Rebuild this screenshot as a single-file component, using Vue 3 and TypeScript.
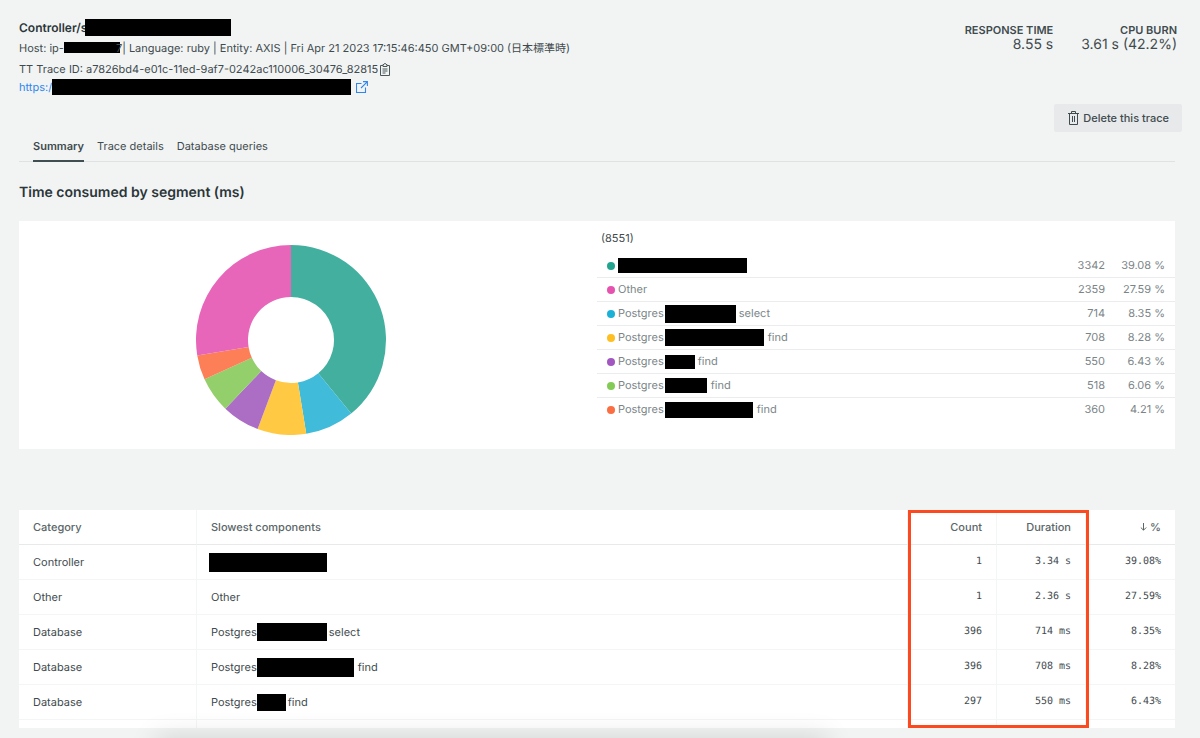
<script setup lang="ts">
interface Segment {
  label: string
  mask: number
  maskHeight: number
  gap: number
  suffix: string
  ms: number
  percent: string
  dot: string
  fill: string
}

interface Component {
  category: string
  label: string
  mask: number
  maskHeight: number
  gap: number
  suffix: string
  count: number
  duration: string
  percent: string
}

const segments: Segment[] = [
  { label: '', mask: 129, maskHeight: 15, gap: 0, suffix: '', ms: 3342, percent: '39.08', dot: '#22a48f', fill: '#43b09f' },
  { label: 'Other', mask: 0, maskHeight: 0, gap: 0, suffix: '', ms: 2359, percent: '27.59', dot: '#e553ae', fill: '#e866b9' },
  { label: 'Postgres', mask: 71, maskHeight: 18, gap: 3, suffix: 'select', ms: 714, percent: '8.35', dot: '#1bb0d6', fill: '#40bbda' },
  { label: 'Postgres', mask: 99, maskHeight: 17, gap: 4, suffix: 'find', ms: 708, percent: '8.28', dot: '#ffbf22', fill: '#ffc943' },
  { label: 'Postgres', mask: 30, maskHeight: 14, gap: 3, suffix: 'find', ms: 550, percent: '6.43', dot: '#a157bf', fill: '#ac6dc5' },
  { label: 'Postgres', mask: 42, maskHeight: 15, gap: 4, suffix: 'find', ms: 518, percent: '6.06', dot: '#84cb55', fill: '#93cf6a' },
  { label: 'Postgres', mask: 88, maskHeight: 16, gap: 4, suffix: 'find', ms: 360, percent: '4.21', dot: '#fb6e42', fill: '#fc7f57' },
]

const components: Component[] = [
  { category: 'Controller', label: '', mask: 118, maskHeight: 19, gap: 0, suffix: '', count: 1, duration: '3.34 s', percent: '39.08%' },
  { category: 'Other', label: 'Other', mask: 0, maskHeight: 0, gap: 0, suffix: '', count: 1, duration: '2.36 s', percent: '27.59%' },
  { category: 'Database', label: 'Postgres', mask: 70, maskHeight: 18, gap: 2, suffix: 'select', count: 396, duration: '714 ms', percent: '8.35%' },
  { category: 'Database', label: 'Postgres', mask: 97, maskHeight: 19, gap: 4, suffix: 'find', count: 396, duration: '708 ms', percent: '8.28%' },
  { category: 'Database', label: 'Postgres', mask: 29, maskHeight: 17, gap: 2, suffix: 'find', count: 297, duration: '550 ms', percent: '6.43%' },
]

const total = segments.reduce((sum, s) => sum + s.ms, 0)
const ringOrder = [0, 2, 3, 4, 5, 6, 1]

function point(radius: number, turn: number): string {
  const a = turn * Math.PI * 2
  return `${(95 + radius * Math.sin(a)).toFixed(2)} ${(95 - radius * Math.cos(a)).toFixed(2)}`
}

let start = 0
const slices = ringOrder.map((i) => {
  const end = start + segments[i].ms / total
  const large = end - start > 0.5 ? 1 : 0
  const d = `M${point(95, start)}A95 95 0 ${large} 1 ${point(95, end)}L${point(43, end)}A43 43 0 ${large} 0 ${point(43, start)}Z`
  start = end
  return { d, fill: segments[i].fill }
})
</script>

<template>
  <main class="page">
    <header class="head">
      <div class="info">
        <h1 class="title">Controller/s<span class="mask over" :style="{ width: '146px', height: '17px' }"></span></h1>
        <p class="host"><span>Host: ip-</span><span class="mask" :style="{ width: '56px', height: '11px' }"></span><span class="tail">7</span><span>| Language: ruby | Entity: AXIS | Fri Apr 21 2023 17:15:46:450 GMT+09:00 (日本標準時)</span></p>
        <p class="trace">
          <span>TT Trace ID: a7826bd4-e01c-11ed-9af7-0242ac110006_30476_82815</span>
          <button class="copy" type="button" aria-label="Copy trace ID">
            <svg width="10" height="13" viewBox="0 0 10 13" fill="none" stroke="#4c5759">
              <path d="M3 2.5H.5v10h9v-10H7M3 1.5h1L4.5.5h1l.5 1h1v2H3zM2.5 6h5M2.5 8h5M2.5 10h3" />
            </svg>
          </button>
        </p>
        <p class="url">
          <a href="#">
            <span>https:/</span><span class="mask" :style="{ width: '299px', height: '16px' }"></span>
            <svg class="ext" width="12" height="12" viewBox="0 0 12 12" fill="none" stroke="#2f86ee" stroke-width="1.1">
              <path d="M5.5 2.5h-5v9h9v-5M7 .6h4.4V5M11.2.8 5 7" />
            </svg>
          </a>
        </p>
      </div>
      <div class="side">
        <dl class="metrics">
          <div><dt>RESPONSE TIME</dt><dd>8.55 s</dd></div>
          <div><dt>CPU BURN</dt><dd>3.61 s (42.2%)</dd></div>
        </dl>
        <button class="delete" type="button">
          <svg width="11" height="14" viewBox="0 0 11 14" fill="none" stroke="#3f4b4e">
            <path d="M0 2.5h11M3.5 2V.5h4V2M1.5 2.5v11h8v-11M4.5 5v6M6.5 5v6" />
          </svg>
          Delete this trace
        </button>
      </div>
    </header>

    <nav class="tabs">
      <a class="active" href="#" aria-current="page">Summary</a>
      <a href="#">Trace details</a>
      <a href="#">Database queries</a>
    </nav>

    <h2 class="heading">Time consumed by segment (ms)</h2>

    <section class="panel">
      <div class="chart">
        <svg width="190" height="190" viewBox="0 0 190 190" role="img" aria-label="Time consumed by segment">
          <path v-for="(s, i) in slices" :key="i" :d="s.d" :fill="s.fill" />
        </svg>
      </div>
      <div class="legend">
        <p class="total">({{ total }})</p>
        <table>
          <tbody>
            <tr v-for="(s, i) in segments" :key="i">
              <td>
                <div class="name">
                  <span class="dot" :style="{ background: s.dot }"></span>
                  <span v-if="s.label" class="label">{{ s.label }}</span>
                  <span v-if="s.mask" class="mask" :style="{ width: s.mask + 'px', height: s.maskHeight + 'px', marginRight: s.gap + 'px' }"></span>
                  <span>{{ s.suffix }}</span>
                </div>
              </td>
              <td class="ms">{{ s.ms }}</td>
              <td class="pct">{{ s.percent }} %</td>
            </tr>
          </tbody>
        </table>
      </div>
    </section>

    <section class="slowest">
      <table class="grid">
        <colgroup>
          <col class="c-category" />
          <col />
          <col class="c-num" />
          <col class="c-num" />
          <col class="c-num" />
        </colgroup>
        <thead>
          <tr>
            <th>Category</th>
            <th>Slowest components</th>
            <th class="num">Count</th>
            <th class="num">Duration</th>
            <th class="num">
              <svg width="7" height="8" viewBox="0 0 7 8" fill="none" stroke="#5a6668"><path d="M3.5 0v7M.8 4.5l2.7 2.7 2.7-2.7" /></svg>
              %
            </th>
          </tr>
        </thead>
        <tbody>
          <tr v-for="(c, i) in components" :key="i">
            <td>{{ c.category }}</td>
            <td>
              <div class="comp" :class="{ bare: !c.label }">
                <span v-if="c.label">{{ c.label }}</span>
                <span v-if="c.mask" class="mask" :style="{ width: c.mask + 'px', height: c.maskHeight + 'px', marginRight: c.gap + 'px' }"></span>
                <span v-if="c.suffix">{{ c.suffix }}</span>
              </div>
            </td>
            <td class="num mono">{{ c.count }}</td>
            <td class="num mono">{{ c.duration }}</td>
            <td class="num mono">{{ c.percent }}</td>
          </tr>
          <tr class="partial"><td></td><td></td><td></td><td></td><td></td></tr>
        </tbody>
      </table>
      <div class="highlight"></div>
    </section>
    <div class="shade"></div>
  </main>
</template>

<style>
body {
  margin: 0;
  background: #f2f4f4;
}
</style>

<style scoped>
.page {
  position: relative;
  box-sizing: border-box;
  min-height: 100vh;
  padding: 18px 25px 9px 19px;
  overflow: hidden;
  background: #f2f4f4;
  color: #3f4b4e;
  font: 11px/20px Inter, "Noto Sans CJK JP", sans-serif;
  text-rendering: geometricPrecision;
}
h1, h2, p, dl, dd { margin: 0; }
button { font: inherit; color: inherit; border: 0; cursor: pointer; }
a { color: inherit; text-decoration: none; }
svg { display: block; flex: none; }
table { width: 100%; border-collapse: separate; border-spacing: 0; }
.mask { display: inline-block; flex: none; background: #000; }

.head { display: flex; justify-content: space-between; align-items: flex-start; }
.title, .host, .trace, .url, .url a { display: flex; align-items: center; white-space: nowrap; }
.title { height: 19px; font-size: 12px; font-weight: 600; color: #2b3639; }
.over { margin-left: -2px; }
.host { height: 21px; }
.tail { margin-left: -4px; }
.trace { height: 22px; }
.copy { padding: 0; margin-left: 2px; background: none; }
.url { height: 14px; }
.url a { color: #2f86ee; }
.ext { margin-left: 5px; }

.side { display: flex; flex-direction: column; align-items: flex-end; gap: 52px; padding-top: 5px; margin-right: -7px; }
.metrics { display: flex; gap: 28px; margin-right: 5px; text-align: right; }
.metrics dt { font-weight: 600; line-height: 14px; }
.metrics dd { font-size: 14px; line-height: 15px; }
.delete {
  display: flex;
  align-items: center;
  gap: 4px;
  height: 28px;
  padding: 0 13px 0 14px;
  border-radius: 2px;
  background: #e7e9ea;
  font-weight: 500;
}

.tabs { display: flex; gap: 13px; padding: 0 14px; border-bottom: 1px solid #dfe2e2; }
.tabs a { height: 30px; line-height: 28px; margin-bottom: -1px; box-sizing: border-box; }
.tabs .active { font-weight: 600; border-bottom: 2px solid #3f4e50; }
.heading { margin: 19px 0 16px; font-size: 14px; line-height: 24px; font-weight: 600; color: #2b3639; }

.panel { display: flex; height: 228px; background: #fff; }
.chart, .legend { width: 50%; box-sizing: border-box; }
.chart { display: flex; align-items: flex-start; justify-content: center; padding: 24px 34px 0 0; }
.legend { color: #7b8588; }
.total { padding: 7px 4px 6px; color: #3f4b4e; }
.legend td { height: 23px; padding: 0; border-bottom: 1px solid #eaeced; line-height: 23px; }
.legend tr:last-child td { border-bottom: 0; }
.name { display: flex; align-items: center; padding-left: 10px; height: 23px; }
.dot { width: 8px; height: 8px; margin-right: 3px; border-radius: 50%; }
.label { margin-right: 1px; }
.ms, .pct { text-align: right; }
.legend .pct { width: 70px; padding-right: 10px; box-sizing: border-box; }

.slowest { position: relative; margin-top: 61px; background: #fff; }
.grid { table-layout: fixed; }
.c-category { width: 178px; }
.c-num { width: 89px; }
.grid th, .grid td { height: 34px; padding: 0 14px; border-right: 1px solid #f4f5f5; border-bottom: 1px solid #f4f5f5; text-align: left; }
.grid th { border-bottom-color: #e8eaea; font-weight: 500; color: #5a6668; }
.grid th:last-child, .grid td:last-child { border-right: 0; }
.grid .num { text-align: right; }
.num svg { display: inline-block; }
.grid .mono { font-family: "DejaVu Sans Mono", monospace; font-size: 10px; }
.grid .partial td { height: 8px; border-bottom: 0; }
.comp { display: flex; align-items: center; height: 34px; }
.bare { margin-left: -2px; }
.highlight {
  position: absolute;
  top: 0;
  right: 86px;
  bottom: 0;
  width: 181px;
  box-sizing: border-box;
  border: 3px solid #fb4a20;
}
.shade {
  position: absolute;
  left: 13%;
  right: 31%;
  bottom: -40px;
  height: 40px;
  box-shadow: 0 0 28px rgba(0, 0, 0, 0.14);
}
</style>
